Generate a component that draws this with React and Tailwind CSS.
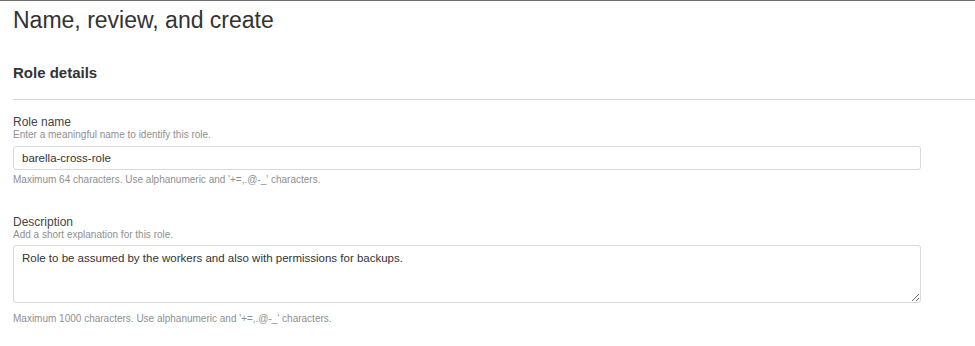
import { useState } from "react";

const hintCls = "text-[10px] leading-[12px] text-[#8f8f8f]";

export default function App() {
  const [roleName, setRoleName] = useState("barella-cross-role");
  const [description, setDescription] = useState(
    "Role to be assumed by the workers and also with permissions for backups."
  );

  return (
    <div className="min-h-[346px] bg-white border-t border-[#6e6e6e] pl-[13px] font-['Liberation_Sans',Arial,sans-serif]">
      {/* Page title */}
      <h1 className="mt-[5px] text-[23px] leading-[28px] text-[#333]">
        Name, review, and create
      </h1>

      {/* Section header */}
      <div className="mt-[29px] pb-[16px] border-b border-[#d5d5d5]">
        <h2 className="text-[15px] leading-[20px] font-bold text-[#333]">
          Role details
        </h2>
      </div>

      {/* Role name */}
      <div className="mt-[15px] flex flex-col">
        <label className="text-[12px] leading-[14px] text-[#444]">Role name</label>
        <span className={hintCls}>Enter a meaningful name to identify this role.</span>
        <input
          type="text"
          value={roleName}
          onChange={(e) => setRoleName(e.target.value)}
          className="mt-[5px] h-[24px] w-[908px] rounded-[3px] border border-[#d9d9d9] px-2 text-[11.5px] text-[#333] outline-none"
        />
        <span className={`mt-[4px] ${hintCls}`}>
          Maximum 64 characters. Use alphanumeric and '+=,.@-_' characters.
        </span>
      </div>

      {/* Description */}
      <div className="mt-[29px] flex flex-col">
        <label className="text-[12px] leading-[14px] text-[#444]">Description</label>
        <span className={hintCls}>Add a short explanation for this role.</span>
        <textarea
          value={description}
          onChange={(e) => setDescription(e.target.value)}
          className="mt-[4px] h-[58px] w-[908px] rounded-[3px] border border-[#d9d9d9] px-2 pt-[4px] text-[11.5px] leading-[16px] text-[#333] outline-none"
        />
        <span className={`mt-[10px] ${hintCls}`}>
          Maximum 1000 characters. Use alphanumeric and '+=,.@-_' characters.
        </span>
      </div>
    </div>
  );
}
